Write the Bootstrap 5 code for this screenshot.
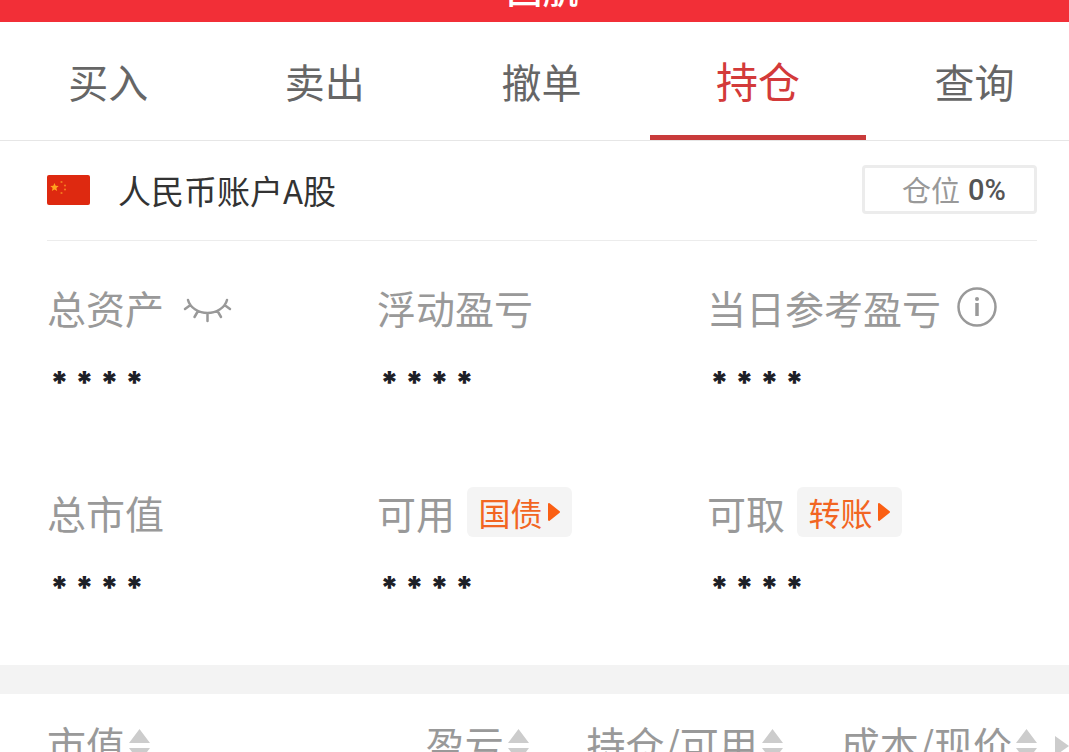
<!DOCTYPE html>
<html lang="zh-CN">
<head>
<meta charset="utf-8">
<meta name="viewport" content="width=device-width, initial-scale=1">
<title>持仓</title>
<link href="https://cdn.jsdelivr.net/npm/bootstrap@5.3.0/dist/css/bootstrap.min.css" rel="stylesheet">
<style>
  body { font-family: "Noto Sans CJK SC", sans-serif; color: #333; background: #fff; }
  .app-header { background: #f22f37; height: 22px; padding-bottom: 16px; }
  .app-title { font-size: 36px; line-height: 36px; font-weight: 500; }
  .trade-tabs { border-bottom: 1px solid #e6e6e6; height: 119px; width: 101.3%; }
  .trade-tabs .nav-item { flex: 1 1 0; }
  .trade-tabs .nav-link { height: 118px; padding: 0; font-size: 40px; line-height: 118px; color: #666; text-align: center; border-radius: 0; }
  .trade-tabs .nav-link.active { color: #d33a3a; box-shadow: inset 0 -5px #c93b3b; font-size: 42px; line-height: 116px; }
  .side-pad { padding-left: 47px; padding-right: 32px; }
  .account-row { height: 100px; padding-bottom: 2px; border-bottom: 1px solid #ececec; }
  .account-name { font-size: 33px; line-height: 40px; font-weight: 400; margin-left: 28px; }
  .ratio-box { width: 175px; height: 49px; border: 3px solid #ececec; border-radius: 4px; font-size: 29px; color: #999; padding-left: 9px; }
  .ratio-box strong { font-family: Roboto, sans-serif; font-weight: 500; color: #555; font-size: 29px; padding-top: 3px; }
  .asset-grid { padding-top: 36px; row-gap: 22px; }
  .asset-cell { height: 183px; }
  .asset-label { font-size: 39px; line-height: 60px; height: 60px; color: #999; white-space: nowrap; }
  .masked { font-family: Inter, sans-serif; font-weight: 900; font-size: 31px; line-height: 40px; margin-top: 26px; padding-left: 3px; color: #1d2027; }
  .tag-btn { width: 105px; height: 50px; background: #f4f4f4; color: #f26522; font-size: 32px; line-height: 48px; border: 0; border-radius: 6px; margin-left: 12px; }
  .band { height: 29px; background: #f3f3f3; }
  .holdings { table-layout: fixed; }
  .holdings th { font-size: 39px; line-height: 58px; font-weight: 400; padding: 20px 0; color: #999; white-space: nowrap; }
  .holdings svg { margin-top: 6px; }
  .holdings .first-col { width: 23%; }
  .sort-btn { border: 0; padding: 0; background: none; color: inherit; font: inherit; }
  .more-arrow { right: 0; top: 42px; }
</style>
</head>
<body class="vh-100 overflow-hidden">
<header class="app-header d-flex justify-content-center align-items-end overflow-hidden">
  <h1 class="app-title text-white m-0 ms-3">国航</h1>
</header>
<nav class="overflow-hidden" aria-label="交易">
  <ul class="nav trade-tabs flex-nowrap">
    <li class="nav-item"><a class="nav-link" href="#">买入</a></li>
    <li class="nav-item"><a class="nav-link" href="#">卖出</a></li>
    <li class="nav-item"><a class="nav-link" href="#">撤单</a></li>
    <li class="nav-item"><a class="nav-link active" aria-current="page" href="#">持仓</a></li>
    <li class="nav-item"><a class="nav-link" href="#">查询</a></li>
  </ul>
</nav>
<main>
  <section class="side-pad">
    <div class="account-row d-flex align-items-center">
      <svg width="43" height="30" viewBox="0 0 43 30" aria-hidden="true">
        <rect width="43" height="30" rx="2" fill="#de2910"/>
        <path fill="#ffa51f" d="M7.500 8l1.200 2.700 3 .3-2.300 2 .7 2.900-2.600-1.500-2.600 1.500.7-2.900-2.300-2 3-.3z"/>
        <g fill="#f47a20"><circle cx="14.500" cy="7" r="1.100"/><circle cx="18" cy="10.500" r="1.100"/><circle cx="18" cy="14.500" r="1.100"/><circle cx="14.500" cy="18" r="1.100"/></g>
      </svg>
      <h2 class="account-name mb-0">人民币账户A股</h2>
      <div class="ratio-box ms-auto d-flex align-items-center justify-content-center gap-2"><span>仓位</span><strong>0%</strong></div>
    </div>
    <div class="row g-0 asset-grid">
      <div class="col-4 asset-cell">
        <div class="asset-label d-flex align-items-center">总资产
          <button class="sort-btn d-flex ms-3 pt-1" type="button" aria-label="显示资产">
            <svg width="52" height="30" viewBox="-2 0 52 30" fill="none" stroke="#999" stroke-width="2.500" stroke-linecap="round"><path d="M6 6C8 14 17 19 25.500 19S43 14 45 6M8.500 11L3 15M16 17l-3.500 6M25.500 19v8M35.500 17l3.500 6M42.500 11l5.500 4"/></svg>
          </button>
        </div>
        <div class="masked">* * * *</div>
      </div>
      <div class="col-4 asset-cell">
        <div class="asset-label">浮动盈亏</div>
        <div class="masked">* * * *</div>
      </div>
      <div class="col-4 asset-cell">
        <div class="asset-label d-flex align-items-center">当日参考盈亏
          <button class="sort-btn d-flex ms-3" type="button" aria-label="说明">
            <svg width="40" height="40" viewBox="0 0 40 40"><circle cx="20" cy="20" r="18.500" fill="none" stroke="#999" stroke-width="2.500"/><circle cx="20" cy="12" r="2" fill="#999"/><path d="M20 16v13" stroke="#999" stroke-width="3.500"/></svg>
          </button>
        </div>
        <div class="masked">* * * *</div>
      </div>
      <div class="col-4 asset-cell">
        <div class="asset-label">总市值</div>
        <div class="masked">* * * *</div>
      </div>
      <div class="col-4 asset-cell">
        <div class="asset-label d-flex align-items-center">可用
          <button class="tag-btn d-flex align-items-center justify-content-center gap-1 p-0" type="button">国债
            <svg width="14" height="20" viewBox="0 0 14 20"><path d="M2 2l10 8-10 8z" fill="#fa5f14" stroke="#fa5f14" stroke-width="2" stroke-linejoin="round"/></svg>
          </button>
        </div>
        <div class="masked">* * * *</div>
      </div>
      <div class="col-4 asset-cell">
        <div class="asset-label d-flex align-items-center">可取
          <button class="tag-btn d-flex align-items-center justify-content-center gap-1 p-0" type="button">转账
            <svg width="14" height="20" viewBox="0 0 14 20"><path d="M2 2l10 8-10 8z" fill="#fa5f14" stroke="#fa5f14" stroke-width="2" stroke-linejoin="round"/></svg>
          </button>
        </div>
        <div class="masked">* * * *</div>
      </div>
    </div>
  </section>
  <div class="band"></div>
  <section class="side-pad position-relative">
    <table class="holdings w-100">
      <thead>
        <tr>
          <th scope="col" class="first-col text-start"><button class="sort-btn d-inline-flex align-items-center gap-1" type="button">市值<svg width="21" height="36" viewBox="0 0 21 36" fill="#ccc"><path d="M0 15L10.500 1 21 15zM0 20h21L10.500 34z"/></svg></button></th>
          <th scope="col" class="text-end"><button class="sort-btn d-inline-flex align-items-center gap-1" type="button">盈亏<svg width="21" height="36" viewBox="0 0 21 36" fill="#ccc"><path d="M0 15L10.500 1 21 15zM0 20h21L10.500 34z"/></svg></button></th>
          <th scope="col" class="text-end"><button class="sort-btn d-inline-flex align-items-center gap-1" type="button">持仓/可用<svg width="21" height="36" viewBox="0 0 21 36" fill="#ccc"><path d="M0 15L10.500 1 21 15zM0 20h21L10.500 34z"/></svg></button></th>
          <th scope="col" class="text-end"><button class="sort-btn d-inline-flex align-items-center gap-1" type="button">成本/现价<svg width="21" height="36" viewBox="0 0 21 36" fill="#ccc"><path d="M0 15L10.500 1 21 15zM0 20h21L10.500 34z"/></svg></button></th>
        </tr>
      </thead>
    </table>
    <svg class="more-arrow position-absolute" width="14" height="20" viewBox="0 0 14 20" fill="#ccc" aria-hidden="true"><path d="M0 0l14 10L0 20z"/></svg>
  </section>
</main>
<script src="https://cdn.jsdelivr.net/npm/bootstrap@5.3.0/dist/js/bootstrap.bundle.min.js"></script>
</body>
</html>
